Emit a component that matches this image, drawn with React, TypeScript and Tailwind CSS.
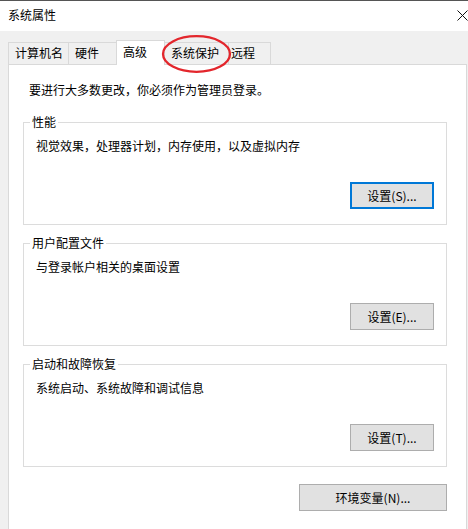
import React from "react";

function GroupBox({
  label,
  text,
  button,
  focused,
  first,
}: {
  label: string;
  text: string;
  button: string;
  focused?: boolean;
  first?: boolean;
}) {
  return (
    <fieldset
      className={`${first ? "mt-[16px]" : "mt-[10px]"} ml-[14px] w-[424px] border border-[#dcdcdc] p-0 m-0`}
    >
      <legend className="ml-[6px] px-[2px] leading-[16px]">{label}</legend>
      <div className="px-[12px] pt-[8px] pb-[15px] flex flex-col">
        <div className="leading-[16px]">{text}</div>
        <div className="flex justify-end mt-[28px]">
          <button
            className={`w-[84px] h-[27px] bg-[#e1e1e1] leading-[16px] flex items-center justify-center ${
              focused ? "border-2 border-[#0078d7]" : "border border-[#adadad]"
            }`}
          >
            {button}
          </button>
        </div>
      </div>
    </fieldset>
  );
}

export default function App() {
  const tabs = [
    { name: "计算机名", w: "w-[61px]", pl: "pl-[6px]" },
    { name: "硬件", w: "w-[49px]", pl: "pl-[6px]" },
    { name: "高级", w: "w-[49px]", pl: "pl-[6px]", selected: true },
    { name: "系统保护", w: "w-[65px]", pl: "pl-[6px]" },
    { name: "远程", w: "w-[43px]", pl: "pl-[2px]" },
  ];
  return (
    <div className="relative w-[468px] h-[529px] overflow-hidden bg-[#f0f0f0] text-[12px] text-black font-['Noto_Sans_CJK_SC','Noto_Sans',sans-serif]">
      {/* Title bar */}
      <div className="h-[31px] bg-white border-t border-[#555555] flex items-center justify-between pl-[8px] pb-[2px]">
        <span className="leading-[16px]">系统属性</span>
        <svg width="11" height="11" viewBox="0 0 11 11" className="mr-[0px] -mb-[1px]">
          <path d="M0.5 0.5 L10.5 10.5 M10.5 0.5 L0.5 10.5" stroke="#111" strokeWidth="1" fill="none" />
        </svg>
      </div>

      {/* Body */}
      <div className="pt-[9px]">
        {/* Tabs */}
        <div className="flex items-end pl-[8px] h-[24px]">
          {tabs.map((t, i) =>
            t.selected ? (
              <div
                key={t.name}
                className={`relative z-10 ${t.w} h-[25px] -mb-[1px] ${i > 0 ? "-ml-[1px]" : ""} bg-white border-t border-l border-r border-[#d9d9d9] ${t.pl} pt-[3px] leading-[16px]`}
              >
                {t.name}
              </div>
            ) : (
              <div
                key={t.name}
                className={`${t.w} h-[22px] ${i > 0 ? "-ml-[1px]" : ""} bg-[#f0f0f0] border-t border-l border-r border-[#d9d9d9] ${t.pl} pt-[2px] leading-[16px]`}
              >
                {t.name}
              </div>
            )
          )}
        </div>

        {/* Panel */}
        <div className="ml-[8px] w-[459px] h-[480px] bg-white border border-[#d9d9d9] pt-[17px]">
          <div className="pl-[20px] leading-[16px]">要进行大多数更改，你必须作为管理员登录。</div>

          <GroupBox
            first
            label="性能"
            text="视觉效果，处理器计划，内存使用，以及虚拟内存"
            button="设置(S)..."
            focused
          />
          <GroupBox label="用户配置文件" text="与登录帐户相关的桌面设置" button="设置(E)..." />
          <GroupBox label="启动和故障恢复" text="系统启动、系统故障和调试信息" button="设置(T)..." />

          <div className="ml-[14px] w-[424px] flex justify-end mt-[17px]">
            <button className="w-[148px] h-[27px] bg-[#e1e1e1] border border-[#adadad] leading-[16px] flex items-center justify-center">
              环境变量(N)...
            </button>
          </div>
        </div>
      </div>

      {/* Red annotation ellipse */}
      <svg
        className="absolute left-[161px] top-[34px] pointer-events-none z-20"
        width="72"
        height="41"
        viewBox="0 0 72 41"
      >
        <ellipse cx="35.5" cy="20" rx="33.5" ry="17.8" fill="none" stroke="#e3262c" strokeWidth="2.3" />
      </svg>
    </div>
  );
}
